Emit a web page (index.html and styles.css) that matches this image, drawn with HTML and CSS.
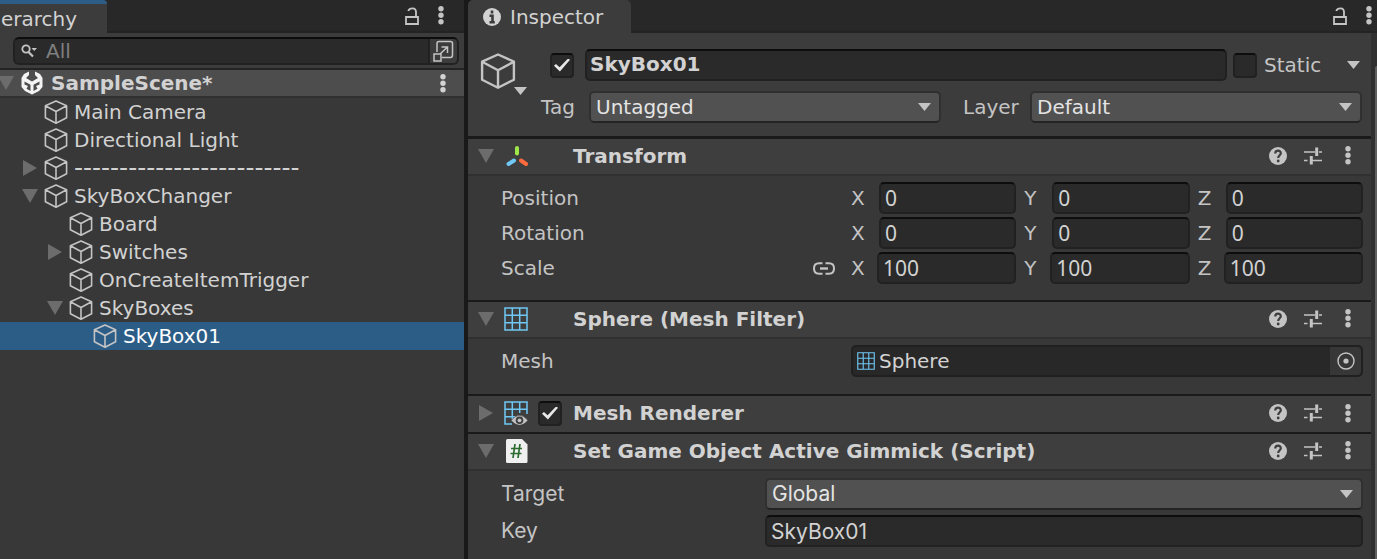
FILE: index.html
```
<!DOCTYPE html>
<html lang="en">
<head>
<meta charset="utf-8">
<title>Inspector</title>
<link rel="stylesheet" href="styles.css">
</head>
<body>
<svg class="defs" aria-hidden="true">
  <symbol id="cube" viewBox="0 0 24 24"><path d="M12 1 22.600 5.800V17.800L12 23.200 1.400 17.800V5.800ZM1.400 5.800 12 11.500 22.600 5.800M12 11.500V23.200" fill="none" stroke="currentColor" stroke-width="1.600" stroke-linejoin="round"/></symbol>
  <symbol id="down" viewBox="0 0 16 14" preserveAspectRatio="none"><path d="M0 0H16L8 14Z" fill="currentColor"/></symbol>
  <symbol id="right" viewBox="0 0 14 16"><path d="M0 0V16L14 8Z" fill="currentColor"/></symbol>
  <symbol id="dots" viewBox="0 0 6 19"><g fill="currentColor"><circle cx="3" cy="2.800" r="2.700"/><circle cx="3" cy="9.300" r="2.700"/><circle cx="3" cy="15.800" r="2.700"/></g></symbol>
  <symbol id="lock" viewBox="0 0 14 18"><path d="M1 10H13V17H1ZM3.200 4C4.500 .5 11 0 11 5V10" fill="none" stroke="currentColor" stroke-width="1.800"/></symbol>
  <symbol id="help" viewBox="0 0 18 18"><circle cx="9" cy="9" r="9" fill="currentColor"/><path d="M6.200 6.500C6.300 2.600 12 2.800 11.800 6.400 11.700 8.300 9.200 8.400 9.200 11" fill="none" stroke="#3e3e3e" stroke-width="2.200"/><circle cx="9.200" cy="14" r="1.400" fill="#3e3e3e"/></symbol>
  <symbol id="preset" viewBox="0 0 18 18"><path d="M0 5H11M15 5H18M0 13.500H3.500M8 13.500H18" stroke="currentColor" stroke-width="1.400"/><path d="M12.700 .5V9M7.300 9V17.500" stroke="currentColor" stroke-width="3"/></symbol>
  <symbol id="grid" viewBox="0 0 24 24"><path d="M1 1H23V23H1ZM8.300 1V23M15.700 1V23M1 8.300H23M1 15.700H23" fill="none" stroke="#6fc8f5" stroke-width="1.500"/></symbol>
</svg>

<div class="editor">
  <section class="panel hierarchy">
    <header class="tabbar">
      <h2 class="tab tab-active">erarchy</h2>
      <div class="tab-tools">
        <button class="icon-btn" aria-label="Lock"><svg class="i-lock"><use href="#lock"/></svg></button>
        <button class="icon-btn" aria-label="Menu"><svg class="i-dots"><use href="#dots"/></svg></button>
      </div>
    </header>
    <div class="toolbar">
      <div class="search">
        <svg class="i-search" viewBox="0 0 16 14"><circle cx="5" cy="5" r="3.700" fill="none" stroke="currentColor" stroke-width="1.800"/><path d="M7.500 8 12 12.500" stroke="currentColor" stroke-width="2.200"/><path d="M10.500 4H16L13.200 7Z" fill="currentColor"/></svg>
        <input class="search-input" type="text" placeholder="All" aria-label="Search">
        <button class="search-pop" aria-label="Open in search window"><svg class="i-pop" viewBox="0 0 22 22"><path d="M5 12V3.500Q5 1.500 7 1.500H18.500Q20.500 1.500 20.500 3.500V15Q20.500 17.500 18.500 17.500H10M2 14H9V21H2ZM8 14 15.500 7M9.500 7H15.500V13" fill="none" stroke="currentColor" stroke-width="1.500"/></svg></button>
      </div>
    </div>
    <div class="scene">
      <svg class="i-fold scene-fold"><use href="#down"/></svg>
      <svg class="i-unity" viewBox="0 0 22 24"><path d="M8 .5 3 3 .5 7V16L4 20 11 23.500 18 20 21.500 16V7L19 3 14 .5V4L17 7 11 10.500 5 7 8 4ZM3.500 10.500 9.500 13.800V20L5.500 17.800 7 15 3.500 13.500ZM18.500 10.500V13.500L15 15 16.500 17.800 12.500 20V13.800Z" fill="#f4f4f4" fill-rule="evenodd"/></svg>
      <span class="scene-name">SampleScene*</span>
      <button class="icon-btn scene-menu" aria-label="Scene menu"><svg class="i-dots"><use href="#dots"/></svg></button>
    </div>
    <ul class="tree">
      <li class="node level-1"><span class="fold"></span><svg class="i-cube"><use href="#cube"/></svg>Main Camera</li>
      <li class="node level-1"><span class="fold"></span><svg class="i-cube"><use href="#cube"/></svg>Directional Light</li>
      <li class="node level-1"><span class="fold"><svg class="i-fold-closed"><use href="#right"/></svg></span><svg class="i-cube"><use href="#cube"/></svg><span class="separator">-------------------------</span></li>
      <li class="node level-1"><span class="fold"><svg class="i-fold"><use href="#down"/></svg></span><svg class="i-cube"><use href="#cube"/></svg>SkyBoxChanger</li>
      <li class="node level-2"><span class="fold"></span><svg class="i-cube"><use href="#cube"/></svg>Board</li>
      <li class="node level-2"><span class="fold"><svg class="i-fold-closed"><use href="#right"/></svg></span><svg class="i-cube"><use href="#cube"/></svg>Switches</li>
      <li class="node level-2"><span class="fold"></span><svg class="i-cube"><use href="#cube"/></svg>OnCreateItemTrigger</li>
      <li class="node level-2"><span class="fold"><svg class="i-fold"><use href="#down"/></svg></span><svg class="i-cube"><use href="#cube"/></svg>SkyBoxes</li>
      <li class="node level-3 node-selected"><span class="fold"></span><svg class="i-cube"><use href="#cube"/></svg>SkyBox01</li>
    </ul>
  </section>

  <section class="panel inspector">
    <header class="tabbar">
      <h2 class="tab tab-inspector"><svg class="i-info" viewBox="0 0 18 18"><circle cx="9" cy="9" r="9" fill="currentColor"/><path d="M9 2.500V5.500M6.500 7.700H9.500V14M6.500 14.200H11.800" fill="none" stroke="#3c3c3c" stroke-width="2.600"/></svg>Inspector</h2>
      <div class="tab-tools">
        <button class="icon-btn" aria-label="Lock"><svg class="i-lock"><use href="#lock"/></svg></button>
        <button class="icon-btn" aria-label="Menu"><svg class="i-dots"><use href="#dots"/></svg></button>
      </div>
    </header>
    <div class="inspector-main">
      <div class="components">
        <div class="object">
          <button class="object-icon" aria-label="Select icon"><svg class="i-cube-large"><use href="#cube"/></svg><svg class="i-caret"><use href="#down"/></svg></button>
          <div class="object-fields">
            <div class="object-row">
              <input class="check" type="checkbox" checked aria-label="Active">
              <input class="field object-name" type="text" value="SkyBox01" aria-label="Name">
              <input class="check" type="checkbox" id="static">
              <label class="static-label" for="static">Static</label>
              <button class="icon-btn" aria-label="Static options"><svg class="i-caret"><use href="#down"/></svg></button>
            </div>
            <div class="object-row2">
              <label for="tag">Tag</label>
              <div class="select"><select id="tag"><option>Untagged</option></select><svg class="i-caret"><use href="#down"/></svg></div>
              <label class="layer-label" for="layer">Layer</label>
              <div class="select"><select id="layer"><option>Default</option></select><svg class="i-caret"><use href="#down"/></svg></div>
            </div>
          </div>
        </div>

        <article class="component">
          <header class="component-head">
            <span class="fold"><svg class="i-fold"><use href="#down"/></svg></span>
            <svg class="i-comp" viewBox="0 0 24 24"><g fill="none" stroke-width="4" stroke-linecap="round"><path d="M13 4V9.500" stroke="#9fe649"/><path d="M10 16.500 4.500 20" stroke="#6fc8f5"/><path d="M17 16.500 22 20" stroke="#ff6a3c"/></g></svg>
            <span class="enable"></span>
            <h3>Transform</h3>
            <div class="comp-tools"><button class="icon-btn" aria-label="Help"><svg class="i-help"><use href="#help"/></svg></button><button class="icon-btn" aria-label="Presets"><svg class="i-help"><use href="#preset"/></svg></button><button class="icon-btn" aria-label="Menu"><svg class="i-dots"><use href="#dots"/></svg></button></div>
          </header>
          <div class="component-body vectors">
            <div class="prop">
              <span class="prop-label">Position</span>
              <div class="vector"><label class="axis"><span>X</span><input class="field" type="text" value="0"></label><label class="axis"><span>Y</span><input class="field" type="text" value="0"></label><label class="axis"><span>Z</span><input class="field" type="text" value="0"></label></div>
            </div>
            <div class="prop">
              <span class="prop-label">Rotation</span>
              <div class="vector"><label class="axis"><span>X</span><input class="field" type="text" value="0"></label><label class="axis"><span>Y</span><input class="field" type="text" value="0"></label><label class="axis"><span>Z</span><input class="field" type="text" value="0"></label></div>
            </div>
            <div class="prop">
              <span class="prop-label">Scale<button class="icon-btn link" aria-label="Constrain proportions"><svg class="i-link" viewBox="0 0 22 13"><path d="M9.500 1.300H6Q1 1.300 1 6.500T6 11.700H9.500M12.500 1.300H16Q21 1.300 21 6.500T16 11.700H12.500" fill="none" stroke="currentColor" stroke-width="2"/><path d="M7 6.500H15" stroke="currentColor" stroke-width="2.400"/></svg></button></span>
              <div class="vector vector-scale"><label class="axis"><span>X</span><input class="field" type="text" value="100"></label><label class="axis"><span>Y</span><input class="field" type="text" value="100"></label><label class="axis"><span>Z</span><input class="field" type="text" value="100"></label></div>
            </div>
          </div>
        </article>

        <article class="component">
          <header class="component-head">
            <span class="fold"><svg class="i-fold"><use href="#down"/></svg></span>
            <svg class="i-comp"><use href="#grid"/></svg>
            <span class="enable"></span>
            <h3>Sphere (Mesh Filter)</h3>
            <div class="comp-tools"><button class="icon-btn" aria-label="Help"><svg class="i-help"><use href="#help"/></svg></button><button class="icon-btn" aria-label="Presets"><svg class="i-help"><use href="#preset"/></svg></button><button class="icon-btn" aria-label="Menu"><svg class="i-dots"><use href="#dots"/></svg></button></div>
          </header>
          <div class="component-body mesh">
            <div class="prop">
              <label class="prop-label" for="mesh">Mesh</label>
              <div class="object-field"><svg class="i-mesh"><use href="#grid"/></svg><input id="mesh" type="text" value="Sphere"><button class="picker" aria-label="Pick mesh"><svg class="i-help" viewBox="0 0 18 18"><circle cx="9" cy="9" r="8" fill="none" stroke="currentColor" stroke-width="1.400"/><circle cx="9" cy="9" r="2.600" fill="currentColor"/></svg></button></div>
            </div>
          </div>
        </article>

        <article class="component">
          <header class="component-head component-closed">
            <span class="fold"><svg class="i-fold-closed"><use href="#right"/></svg></span>
            <svg class="i-comp" viewBox="0 0 24 24"><path d="M8 23H1V1H23V13M8.300 1V18M15.700 1V12M1 8.300H23M1 15.700H11" fill="none" stroke="#6fc8f5" stroke-width="1.500"/><path d="M7 19.500Q15.500 9 24 19.500 15.500 29 7 19.500Z" fill="#c4c4c4" stroke="#3e3e3e" stroke-width=".6"/><circle cx="15.500" cy="19.300" r="3.800" fill="#3e3e3e"/><circle cx="15.500" cy="19.300" r="1.900" fill="#c4c4c4"/></svg>
            <span class="enable"><input class="check" type="checkbox" checked aria-label="Enable Mesh Renderer"></span>
            <h3>Mesh Renderer</h3>
            <div class="comp-tools"><button class="icon-btn" aria-label="Help"><svg class="i-help"><use href="#help"/></svg></button><button class="icon-btn" aria-label="Presets"><svg class="i-help"><use href="#preset"/></svg></button><button class="icon-btn" aria-label="Menu"><svg class="i-dots"><use href="#dots"/></svg></button></div>
          </header>
        </article>

        <article class="component">
          <header class="component-head">
            <span class="fold"><svg class="i-fold"><use href="#down"/></svg></span>
            <svg class="i-comp" viewBox="0 0 24 24"><path d="M3.500 0H18L23.500 5.500V22.500Q23.500 24 22 24H3.500Q2 24 2 22.500V1.500Q2 0 3.500 0Z" fill="#f0f0f0"/><path d="M11 5 9 19M16 5 14 19M7 9.500H18M6.500 14.500H17.500" stroke="#2c6b2f" stroke-width="1.700"/></svg>
            <span class="enable"></span>
            <h3>Set Game Object Active Gimmick (Script)</h3>
            <div class="comp-tools"><button class="icon-btn" aria-label="Help"><svg class="i-help"><use href="#help"/></svg></button><button class="icon-btn" aria-label="Presets"><svg class="i-help"><use href="#preset"/></svg></button><button class="icon-btn" aria-label="Menu"><svg class="i-dots"><use href="#dots"/></svg></button></div>
          </header>
          <div class="component-body script">
            <div class="prop prop-wide">
              <label class="prop-label" for="target">Target</label>
              <div class="select"><select id="target"><option>Global</option></select><svg class="i-caret"><use href="#down"/></svg></div>
            </div>
            <div class="prop prop-wide">
              <label class="prop-label" for="key">Key</label>
              <input class="field" id="key" type="text" value="SkyBox01">
            </div>
          </div>
        </article>
      </div>
      <div class="scrollbar"><div class="thumb"></div></div>
    </div>
  </section>
</div>
</body>
</html>
```
FILE: styles.css
```
* { box-sizing: border-box; }
body {
  margin: 0;
  background: #191919;
  color: #c4c4c4;
  font: 20px/28px "DejaVu Sans", sans-serif;
}
h2, h3, ul { margin: 0; padding: 0; font-size: inherit; }
h2 { font-weight: 400; }
button, input, select { font: inherit; color: inherit; margin: 0; border-radius: 0; }
button { padding: 0; border: 0; background: none; }
svg { display: block; flex: none; }
.defs { position: absolute; width: 0; height: 0; }

.editor {
  display: grid;
  grid-template-columns: minmax(0, 464fr) minmax(0, 909fr);
  gap: 4px;
  min-height: 100vh;
}
.panel { display: flex; flex-direction: column; background: #383838; overflow: hidden; }
.inspector { border-top-left-radius: 5px; }

/* Icon sizes */
.i-dots { width: 6px; height: 19px; }
.i-lock { width: 14px; height: 18px; }
.i-cube { width: 24px; height: 24px; margin-right: 6px; }
.i-cube-large { width: 36px; height: 38px; }
.i-fold { width: 16px; height: 14px; color: #6c6c6c; }
.i-fold-closed { width: 14px; height: 16px; color: #6c6c6c; }
.i-caret { width: 13px; height: 8px; color: #c4c4c4; }
.i-help { width: 18px; height: 18px; }
.i-info { width: 18px; height: 18px; }
.i-comp { width: 24px; height: 24px; }
.i-mesh { width: 18px; height: 18px; }
.i-link { width: 22px; height: 13px; }
.i-search { width: 16px; height: 14px; }
.i-pop { width: 22px; height: 22px; }
.i-unity { width: 22px; height: 24px; }
.icon-btn { display: flex; align-items: center; justify-content: center; }

/* Tabs */
.tabbar {
  display: flex;
  justify-content: space-between;
  height: 33px;
  background: #282828;
  border-bottom: 2px solid #232323;
}
.tab {
  display: flex;
  align-items: center;
  height: 33px;
  background: #3c3c3c;
  color: #d2d2d2;
}
.tab-active { width: 107px; padding-left: 1px; border-top: 4px solid #2c5d87; border-top-right-radius: 4px; }
.tab-inspector { gap: 9px; padding: 0 28px 0 15px; border-radius: 5px 5px 0 0; }
.tab-tools { display: flex; align-items: center; gap: 19px; }
.hierarchy .tab-tools { padding-right: 20px; }
.inspector .tab-tools { padding-right: 5px; }

/* Hierarchy */
.toolbar { padding: 4px 5px 3px 13px; background: #3c3c3c; border-bottom: 2px solid #232323; }
.search {
  display: flex;
  align-items: center;
  height: 28px;
  padding-left: 6px;
  background: #2a2a2a;
  border: 2px solid #212121;
  border-top-color: #0d0d0d;
  border-radius: 6px;
}
.search-input { flex: 1; min-width: 0; height: 24px; margin-left: 9px; padding: 0; border: 0; background: none; outline: 0; }
.search-input::placeholder { color: #7f7f7f; }
.search-pop { width: 29px; height: 24px; padding-left: 2px; background: #3c3c3c; border-left: 2px solid #212121; border-radius: 0 4px 4px 0; }
.scene {
  display: flex;
  align-items: center;
  height: 28px;
  padding-right: 18px;
  background: #4d4d4d;
  border-bottom: 2px solid #303030;
  color: #d2d2d2;
  font-weight: 700;
}
.scene-fold { margin-left: -2px; }
.i-unity { margin: 0 8px 0 7px; }
.scene-name { flex: 1; }
.tree { list-style: none; }
.node { display: flex; align-items: center; height: 28px; white-space: nowrap; color: #d2d2d2; }
.node .i-cube { color: #c4c4c4; }
.separator { font-size: 25px; }
.node-selected { background: #2c5d87; color: #fff; }
.level-1 { padding-left: 22px; }
.level-2 { padding-left: 47px; }
.level-3 { padding-left: 71px; }
.fold { display: flex; flex: none; justify-content: center; width: 16px; margin-right: 6px; }

/* Controls */
.field {
  width: 100%;
  min-width: 0;
  height: 32px;
  padding: 0 4px;
  background: #2a2a2a;
  border: 2px solid #212121;
  border-top-color: #0d0d0d;
  border-radius: 5px;
  color: #d2d2d2;
}
.check {
  appearance: none;
  display: grid;
  place-items: center;
  flex: none;
  width: 24px;
  height: 25px;
  background: #2a2a2a;
  border: 2px solid #212121;
  border-top-color: #0d0d0d;
  border-radius: 4px;
}
.check:checked::before {
  content: "";
  width: 16px;
  height: 13px;
  background: #e8e8e8;
  clip-path: polygon(0 55%, 12% 43%, 35% 68%, 88% 0, 100% 10%, 37% 100%);
}
.select { position: relative; min-width: 0; }
.select select {
  appearance: none;
  display: block;
  width: 100%;
  height: 32px;
  padding: 0 28px 0 5px;
  background: #515151;
  border: 2px solid #303030;
  border-bottom-color: #242424;
  border-radius: 5px;
  color: #e4e4e4;
}
.select .i-caret { position: absolute; right: 10px; top: 12px; pointer-events: none; }

/* Inspector */
.inspector-main { display: flex; flex: 1; }
.components { flex: 1; min-width: 0; }
.scrollbar { width: 6px; padding: 33px 0 0 4px; background: #303030; }
.thumb { height: 100%; background: #5f5f5f; border-top-left-radius: 2px; }
.object { display: flex; gap: 14px; padding: 16px 9px 13px 12px; background: #3c3c3c; }
.object-icon { display: flex; flex: none; align-items: flex-start; width: 47px; padding-top: 3px; }
.object-icon .i-caret { margin: 35px 0 0 -2px; }
.object-fields { display: flex; flex: 1; min-width: 0; flex-direction: column; gap: 10px; }
.object-row { display: flex; align-items: center; padding: 0 2px 0 9px; }
.object-name { flex: 1; margin: 0 6px 0 11px; padding: 0 3px 3px; font-weight: 700; }
.static-label { width: 90px; padding-left: 7px; }
.object-row2 { display: grid; grid-template-columns: 48px 352fr 89px 332fr; align-items: center; }
.layer-label { padding-left: 22px; }

.component { border-top: 2px solid #1a1a1a; }
.object + .component { border-top-width: 3px; }
.component-head { display: flex; align-items: center; height: 37px; padding: 0 20px 2px 10px; background: #3e3e3e; border-bottom: 2px solid #303030; }
.component-head.component-closed { height: 36px; border-bottom: 0; }
.component-head h3 { flex: 1; min-width: 0; color: #d2d2d2; font-weight: 700; }
.component-head .fold { margin-right: 10px; }
.enable { display: flex; width: 45px; padding-left: 10px; }
.comp-tools { display: flex; align-items: center; gap: 17px; }
.comp-tools .i-dots { margin-left: 6px; }
.component-body { display: grid; gap: 3px; padding: 6px 8px 16px 33px; background: #383838; }
.mesh { padding-bottom: 17px; }
.prop { display: grid; grid-template-columns: 350fr 512fr; align-items: center; }
.prop-label { display: flex; align-items: center; justify-content: space-between; }
.link { margin-right: 16px; }
.vector { display: grid; grid-template-columns: repeat(3, minmax(0, 1fr)); gap: 8px; }
.vector .field { font-family: "Noto Sans", sans-serif; font-size: 21px; }
.axis { display: grid; grid-template-columns: 28px minmax(0, 1fr); align-items: center; }
.vector-scale .axis { grid-template-columns: 26px minmax(0, 1fr); }
.object-field { display: flex; align-items: center; height: 32px; padding-left: 4px; background: #282828; border: 2px solid #202020; border-radius: 5px; }
.object-field input { flex: 1; min-width: 0; height: 28px; margin-left: 4px; padding: 0; border: 0; background: none; color: #d2d2d2; }
.picker { display: grid; place-items: center; width: 31px; height: 28px; background: #373737; border-radius: 0 4px 4px 0; }
.script { gap: 5px; padding-top: 7px; font-family: Inter, sans-serif; font-size: 21px; }
.prop-wide { grid-template-columns: 264fr 598fr; }
```
